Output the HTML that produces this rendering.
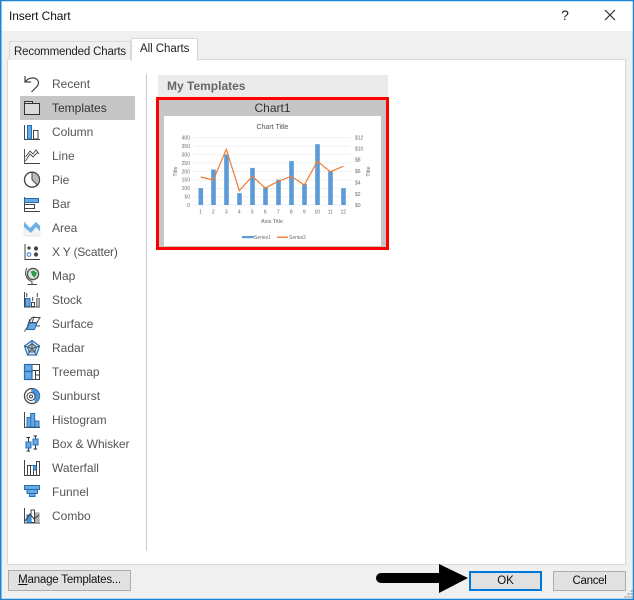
<!DOCTYPE html>
<html><head><meta charset="utf-8"><style>
html,body{margin:0;padding:0}
body{width:634px;height:600px;overflow:hidden;background:#f0f0f0;position:relative;font-family:"Liberation Sans",sans-serif;font-size:12px;color:#222}
div{position:absolute;box-sizing:border-box}
.t{white-space:nowrap;line-height:16px}
.l{left:52px;color:#555;white-space:nowrap;line-height:16px}
.b{background:#e1e1e1;border:1px solid #adadad;text-align:center;line-height:19px;color:#111;font-size:11.5px}
svg{position:absolute;left:0;top:0}
</style></head><body>
<div style="left:0;top:0;width:634px;height:31px;background:#fff"></div>
<div class="t" style="left:9px;top:8px;letter-spacing:-.1px;color:#111">Insert Chart</div>
<div style="left:7px;top:59px;width:619px;height:506px;background:#fff;border:1px solid #d9d9d9"></div>
<div style="left:9px;top:41px;width:122px;height:19px;background:#f0f0f0;border:1px solid #d9d9d9;border-bottom:0"></div>
<div class="t" style="left:14px;top:44px;font-size:11.5px;letter-spacing:-.17px;color:#222">Recommended Charts</div>
<div style="left:131px;top:38px;width:67px;height:23px;background:#fff;border:1px solid #d9d9d9;border-bottom:0"></div>
<div class="t" style="left:140px;top:41px;font-size:11.5px;letter-spacing:-.05px;color:#222">All Charts</div>
<div style="left:146px;top:74px;width:1px;height:477px;background:#c8c8c8"></div>
<div style="left:20px;top:96px;width:115px;height:24px;background:#c6c6c6"></div>
<div class="l" style="top:76px">Recent</div>
<div class="l" style="top:100px;color:#333">Templates</div>
<div class="l" style="top:124px">Column</div>
<div class="l" style="top:148px">Line</div>
<div class="l" style="top:172px">Pie</div>
<div class="l" style="top:196px">Bar</div>
<div class="l" style="top:220px">Area</div>
<div class="l" style="top:244px;letter-spacing:-.2px">X Y (Scatter)</div>
<div class="l" style="top:268px">Map</div>
<div class="l" style="top:292px">Stock</div>
<div class="l" style="top:316px">Surface</div>
<div class="l" style="top:340px">Radar</div>
<div class="l" style="top:364px">Treemap</div>
<div class="l" style="top:388px">Sunburst</div>
<div class="l" style="top:412px">Histogram</div>
<div class="l" style="top:436px;letter-spacing:-.1px">Box &amp; Whisker</div>
<div class="l" style="top:460px">Waterfall</div>
<div class="l" style="top:484px">Funnel</div>
<div class="l" style="top:508px">Combo</div>
<div style="left:158px;top:75px;width:230px;height:22px;background:#ebebeb"></div>
<div class="t" style="left:167px;top:78px;font-weight:bold;color:#666;font-size:12px">My Templates</div>
<div style="left:156px;top:97px;width:233px;height:153px;background:#c6c6c6;border:3px solid #f00"></div>
<div style="left:164px;top:116px;width:217px;height:130px;background:#fff"></div>
<div class="t" style="left:158px;top:100px;width:229px;text-align:center;color:#333;font-size:12px">Chart1</div>
<div class="b" style="left:8px;top:570px;width:123px;height:21px;letter-spacing:-.2px"><span style="text-decoration:underline">M</span>anage Templates...</div>
<div class="b" style="left:469px;top:571px;width:73px;height:20px;border:2px solid #0078d7;line-height:16px">OK</div>
<div class="b" style="left:553px;top:571px;width:73px;height:20px;line-height:18px;letter-spacing:-.3px">Cancel</div>
<svg width="634" height="600" viewBox="0 0 634 600" fill="none">
<!-- window frame -->
<path d="M.75 600V.5H633.5V599.5H0" stroke="#1883d7" stroke-width="1.5"/>
<text x="565" y="20" font-size="14" fill="#222" text-anchor="middle" font-family="Liberation Sans">?</text>
<path d="M605 10L615 20M615 10L605 20" stroke="#222" stroke-width="1.1"/>
<path d="M630.5 590h2v2h-2zM627.5 593h2v2h-2zM630.5 593h2v2h-2zM624.5 596h2v2h-2zM627.5 596h2v2h-2zM630.5 596h2v2h-2z" fill="#b5b5b5"/>
<!-- arrow -->
<path d="M381 573H439V564L468 578L439 593V583H381A5 5 0 0 1 381 573Z" fill="#000"/>
<g stroke="#444" stroke-width="1">
<!-- recent -->
<path d="M25 76V82H31M25 82C28 78 34 76.5 37 79.5C39.5 82 38.5 85.5 36 87.5L31.5 92" stroke-width="1.2"/>
<!-- templates -->
<path d="M24.5 101.5H32.5V103.5H39.5V114.5H24.5ZM24.5 103.5H32.5" fill="#dadada" stroke="#333"/>
<!-- column -->
<path d="M24.5 125V139.5H40"/>
<rect x="27.5" y="125.5" width="4" height="13.5" fill="#6aa8e0" stroke="#1f6fb8"/>
<rect x="33.5" y="130.5" width="4.5" height="8.5" fill="#fff"/>
<!-- line -->
<path d="M24.5 149V163.5H40M25.5 161L30 154L33 157L38 152M25.5 157L30 151L33 154L36 150L39 154" stroke-width=".9"/>
<!-- pie -->
<circle cx="32" cy="179.7" r="7.5" stroke-width="1.3"/>
<path d="M32 179.7V172.2A7.5 7.5 0 0 1 37.3 185Z" fill="#bcbcbc"/>
<!-- bar -->
<path d="M24.5 197V211.5H40"/>
<rect x="24.5" y="198.5" width="14" height="4" fill="#6aa8e0" stroke="#1f6fb8"/>
<rect x="24.5" y="204.5" width="10" height="4" fill="#fff"/>
<!-- scatter -->
<path d="M25 244V259.5H40"/>
<!-- stock -->
<path d="M24.5 292V307H40" />
<rect x="25.5" y="298.5" width="4.5" height="8" fill="#6aa8e0" stroke="#1f6fb8"/>
<rect x="31.5" y="302.5" width="3" height="4" fill="#fff"/>
<rect x="36.5" y="298.5" width="3" height="8" fill="#b5b5b5" stroke="#888"/>
<path d="M26.7 293V297M32.7 297V301M37.3 293V297"/>
<!-- surface -->
<path d="M24.5 331.5L28 326H40M30 319L27.5 326M34 316.5L31 326"/>
<path d="M29 322.5L32 317.5H40L37 322.5Z"/>
<path d="M27 329.5L29.5 323H37L34.5 329.5Z" fill="#6aa8e0" stroke="#1f6fb8"/>
<!-- treemap -->
<rect x="24.5" y="364.5" width="15" height="15" fill="#fff"/>
<path d="M31.5 370.5H39.5M35.5 370.5V379.5M35.5 375H39.5"/>
<rect x="24.5" y="364.5" width="7.5" height="7" fill="#6aa8e0" stroke="#1f6fb8" stroke-width="1.2"/>
<rect x="24.5" y="371.5" width="7.5" height="8" fill="#6aa8e0" stroke="#1f6fb8" stroke-width="1.2"/>
<!-- histogram -->
<path d="M24.5 412V427.5H40"/>
<path d="M27 427V417.5H30.7V413.5H34.7V421H39V427Z" fill="#6aa8e0" stroke="#1f6fb8"/>
<path d="M30.7 417.5V427M34.7 421V427" stroke="#1f6fb8"/>
<!-- waterfall -->
<path d="M24.5 460V475.5H40M27.5 475V465.5H30.5V475M33.5 475V465.5M36.5 475V461.5H39.5V475"/>
<path d="M31 465.5H36V470H33.5V465.5" fill="#6aa8e0" stroke="#1f6fb8"/>
<!-- combo -->
<path d="M24.5 508V523H40"/>
<path d="M35 513H39V522.5H35Z" fill="#b5b5b5" stroke="#999"/>
<path d="M31 510H34.5V522.5H31Z" fill="#fff"/>
<path d="M27 515H31V522.5H27Z" fill="#4a94da" stroke="#1f6fb8"/>
<path d="M25 521L30 514L34 519L39 515" stroke-width="1.1"/>
<!-- sunburst -->
<circle cx="32" cy="396" r="7.5" stroke-width="1.3"/>
<circle cx="31" cy="396.5" r="4"/>
<circle cx="31" cy="396.5" r="1.5"/>
</g>
<!-- sunburst blue -->
<path d="M32 388.5A7.5 7.5 0 0 1 36 402.5L34 399A3.6 3.6 0 0 0 31.5 392.5Z" fill="#4a94da" stroke="#1f6fb8" stroke-width=".6"/>
<!-- area -->
<path d="M24 221L31 228L36 222L40 226V236H24Z" fill="#f0f4f8" stroke="#d8d8d8" stroke-width=".5"/>
<path d="M24 222L30 228L36 222L40 226V231L36 227L31 233L24 227Z" fill="#6fb0e6"/>
<!-- scatter dots -->
<circle cx="36" cy="248.5" r="2.1" fill="#444"/><circle cx="36" cy="254.5" r="2.1" fill="#444"/>
<circle cx="29" cy="248" r="1.6" fill="#444"/><circle cx="29" cy="254.5" r="1.8" fill="#fff" stroke="#2b7cc9"/>
<!-- map -->
<path d="M27 268C24 273 26 280 32 281.5M32 281.5V284.5M27.5 284.5H37" stroke="#444" stroke-width="1"/>
<circle cx="33" cy="274" r="5.6" fill="#dfe8df" stroke="#555" stroke-width="1.4"/>
<path d="M30.5 271.5L34 270.5L37 273L35 277.5L32.5 276Z" fill="#2f9a47"/>
<!-- radar -->
<path d="M32 340.5L39.5 346L36.5 355H27.5L24.5 346Z" stroke="#2b7cc9" stroke-width="1.3" fill="#cfe3f5"/>
<path d="M32 343.5L36.5 347L34.8 352H29.2L27.5 347Z" stroke="#444" stroke-width=".8" fill="#9cc7ea"/>
<path d="M32 340.5V348.5M39.5 346L32 348.5L36.5 355M27.5 355L32 348.5L24.5 346" stroke="#333" stroke-width=".7"/>
<!-- box whisker -->
<g stroke="#222" stroke-width=".9"><path d="M26.5 437.5H30M28.5 437.5V451M26.5 451H30M33.5 436H37M35.5 436V449M33.5 449H37"/></g>
<rect x="26" y="442" width="5" height="6" fill="#6aa8e0" stroke="#1f6fb8"/><rect x="33" y="439" width="5" height="6" fill="#6aa8e0" stroke="#1f6fb8"/>
<!-- funnel -->
<path d="M24.5 485.5H39.5V489.5H37.5V493.5H35V496.5H29.5V493.5H27V489.5H24.5Z" fill="#6aa8e0" stroke="#1f6fb8"/>
<path d="M27 489.5H37.5M29.5 493.5H35" stroke="#1f6fb8"/>
<!-- chart -->
<g filter="url(#blr)">
<g font-family="Liberation Sans" fill="#6a6a6a">
<text x="272.5" y="129" font-size="7" text-anchor="middle" stroke="#6a6a6a" stroke-width=".1">Chart Title</text>
<g stroke="#ededed" stroke-width=".8"><path d="M194 137.7H350M194 146.2H350M194 154.6H350M194 163H350M194 171.5H350M194 180H350M194 188.3H350M194 196.8H350M194 205H350"/></g>
<g font-size="5" text-anchor="end">
<text x="190" y="139.5">400</text><text x="190" y="148">350</text><text x="190" y="156.5">300</text><text x="190" y="165">250</text><text x="190" y="173.3">200</text><text x="190" y="181.7">150</text><text x="190" y="190">100</text><text x="190" y="198.5">50</text><text x="190" y="207">0</text>
</g>
<g font-size="5">
<text x="355" y="139.5">$12</text><text x="355" y="150.5">$10</text><text x="355" y="161.5">$8</text><text x="355" y="173">$6</text><text x="355" y="184.5">$4</text><text x="355" y="196">$2</text><text x="355" y="207">$0</text>
</g>
<g font-size="5" text-anchor="middle">
<text x="200.7" y="213.5">1</text><text x="213.3" y="213.5">2</text><text x="226.3" y="213.5">3</text><text x="239.3" y="213.5">4</text><text x="252.3" y="213.5">5</text><text x="265.3" y="213.5">6</text><text x="278.3" y="213.5">7</text><text x="291.3" y="213.5">8</text><text x="304.3" y="213.5">9</text><text x="317.3" y="213.5">10</text><text x="330.3" y="213.5">11</text><text x="343.3" y="213.5">12</text>
<text x="272" y="223" font-size="5.5">Axis Title</text>
<text transform="translate(177 171.5) rotate(-90)" font-size="5.5">Title</text>
<text transform="translate(370 171.5) rotate(-90)" font-size="5.5">Title</text>
</g>
<text x="254" y="239" font-size="5">Series1</text><text x="289" y="239" font-size="5">Series2</text>
</g>
<g fill="#5b9bd5">
<rect x="198.5" y="188.2" width="4.6" height="16.8"/><rect x="211.2" y="169.5" width="4.6" height="35.5"/><rect x="224.2" y="154.4" width="4.6" height="50.6"/><rect x="237.2" y="193.2" width="4.6" height="11.8"/><rect x="250.2" y="167.9" width="4.6" height="37.1"/><rect x="263.2" y="187.3" width="4.6" height="17.7"/><rect x="276.2" y="179.7" width="4.6" height="25.3"/><rect x="289.2" y="161.1" width="4.6" height="43.9"/><rect x="302.2" y="183.9" width="4.6" height="21.1"/><rect x="315.2" y="144.2" width="4.6" height="60.8"/><rect x="328.2" y="171.2" width="4.6" height="33.8"/><rect x="341.2" y="188.2" width="4.6" height="16.8"/>
<rect x="242" y="236" width="12" height="2.2"/>
</g>
<polyline points="200.7,177 213.3,180 226.3,149.3 239.3,190.7 252.3,176.3 265.3,188 278.3,181.3 291.3,176.3 304.3,185 317.3,161.3 330.3,171.7 343.3,166.3" stroke="#ed7d31" stroke-width="1.2" fill="none"/>
<rect x="277" y="236.5" width="11" height="1.4" fill="#ed7d31"/>
</g>
<defs><filter id="blr" x="160" y="110" width="230" height="140" filterUnits="userSpaceOnUse"><feGaussianBlur stdDeviation=".3"/></filter></defs>
</svg>
</body></html>
